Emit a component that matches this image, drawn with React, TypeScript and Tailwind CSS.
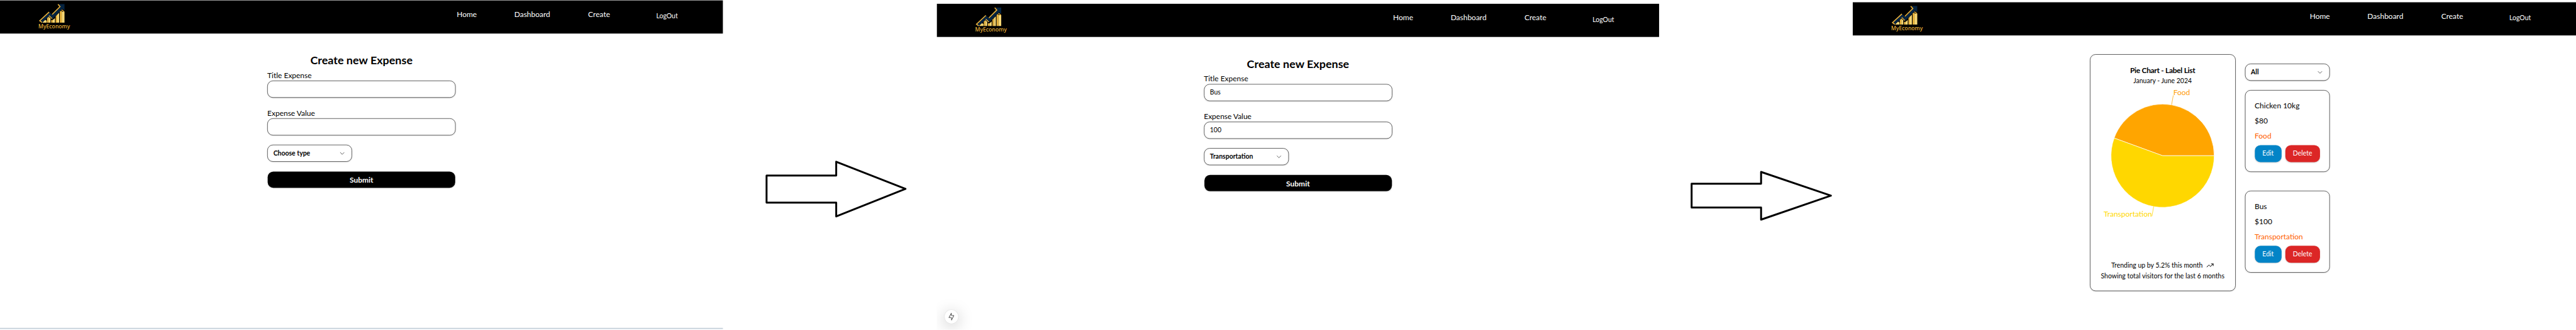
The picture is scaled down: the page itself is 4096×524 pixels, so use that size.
import type { ReactNode } from "react";
import { ChevronDown, TrendingUp } from "lucide-react";

function Logo() {
  return (
    <svg className="h-[88px] w-[92px] shrink-0" viewBox="0 0 92 88">
      <path d="M14 59 L22 51 L26 54 V59 Z" fill="#f7d774" />
      <path d="M27 59 V47 L31 43 V59 Z" fill="#e9b33a" />
      <path d="M31 59 V43 L36 48 V59 Z" fill="#f7d774" />
      <path d="M38 59 V52 H42 V59 Z" fill="#e9b33a" />
      <path d="M42 59 V52 L48 47 V59 Z" fill="#f7d774" />
      <path d="M50 59 V42 L54 38 V59 Z" fill="#e9b33a" />
      <path d="M54 59 V38 L59 33 V59 Z" fill="#f7d774" />
      <path d="M61 59 V29 L66 27 V59 Z" fill="#e9b33a" />
      <path d="M66 59 V30 H73.300 V59 Z" fill="#f7d774" />
      <path
        d="M58 10 H73.300 V27 L68 22.500 L41.500 49 L33 41 L14 59 L8 54 L33 31 L41 38.500 L62.500 16.500 Z"
        fill="#052340"
      />
      <path
        d="M13.500 58.500 L7.500 54 L32.500 31 M40.500 37.500 L61.500 16.500 L56 10.500"
        fill="none"
        stroke="#eeb33a"
        strokeWidth="2.600"
      />
      <path d="M32 40.500 L40.500 48.500 M66 25 L72.500 30.500" fill="none" stroke="#eeb33a" strokeWidth="2.200" />
      <text
        x="4"
        y="74"
        textLength="84"
        lengthAdjust="spacingAndGlyphs"
        fill="#e9b33a"
        className="font-['Noto_Sans',sans-serif] text-[14px] font-medium"
      >
        MyEconomy
      </text>
    </svg>
  );
}

function NavBar() {
  return (
    <nav className="flex h-[88px] w-full items-start justify-between bg-black pl-[98px] pr-[120px] text-white">
      <Logo />
      <div className="flex pt-[21px] text-[20px] leading-[30px]">
        <span className="w-[153px]">Home</span>
        <span className="w-[196px]">Dashboard</span>
        <span className="w-[181px]">Create</span>
        <span className="w-[57px] pt-[6px] text-[17.500px]">LogOut</span>
      </div>
    </nav>
  );
}

function Screen({ className, children }: { className: string; children: ReactNode }) {
  return (
    <section className={`flex shrink-0 flex-col items-center ${className}`}>
      <NavBar />
      {children}
    </section>
  );
}

function Select({ value }: { value: string }) {
  return (
    <div className="flex h-[45px] w-[225px] items-center justify-between rounded-[15px] border-[1.250px] border-black pl-[15px] pr-[15px] text-[17.500px] font-bold shadow-sm">
      <span>{value}</span>
      <ChevronDown className="h-[20px] w-[20px] opacity-60" />
    </div>
  );
}

function Field({ label, value }: { label: string; value: string }) {
  return (
    <div className="flex h-[100px] flex-col">
      <span className="h-[30px] text-[20px] leading-[30px]">{label}</span>
      <div className="flex h-[45px] items-center rounded-[15px] border-[1.250px] border-black pl-[15px] text-[17.500px] shadow-sm">
        {value}
      </div>
    </div>
  );
}

function ExpenseForm({ title, amount, type }: { title: string; amount: string; type: string }) {
  return (
    <div className="mt-[51px] flex w-[500px] flex-col">
      <h1 className="h-[44px] text-center text-[30px] font-bold leading-[38px]">Create new Expense</h1>
      <Field label="Title Expense" value={title} />
      <Field label="Expense Value" value={amount} />
      <Select value={type} />
      <div className="mx-px mt-[26px] flex h-[43px] items-center justify-center rounded-[15px] bg-black text-[20px] font-bold text-white shadow">
        Submit
      </div>
    </div>
  );
}

function FlowArrow({ className, points }: { className: string; points: string }) {
  return (
    <svg className={`shrink-0 ${className}`} viewBox="0 0 380 160">
      <polygon points={points} fill="none" stroke="black" strokeWidth="5" strokeLinejoin="round" />
    </svg>
  );
}

function PieChart() {
  return (
    <svg className="mt-[2px] h-[380px] w-[384px]" viewBox="0 0 384 380">
      <path d="M192 184 H329 A137 137 0 0 0 63.260 137.140 Z" fill="#ffa500" stroke="white" strokeWidth="1.250" />
      <path d="M192 184 L63.260 137.140 A137 137 0 1 0 329 184 Z" fill="#ffd700" stroke="white" strokeWidth="1.250" />
      <path d="M215.800 49 L220.300 24" stroke="#ffa500" strokeWidth="1.250" />
      <path d="M168.200 319 L163.700 344.500" stroke="#ffd700" strokeWidth="1.250" />
      <text x="220.500" y="24" fill="#ff9d0a" className="text-[20px]">Food</text>
      <text x="163.500" y="345" textAnchor="end" fill="#ffd700" className="text-[20px]">Transportation</text>
    </svg>
  );
}

function ExpenseCard({ title, price, type }: { title: string; price: string; type: string }) {
  return (
    <div className="flex h-[217px] w-[225px] flex-col rounded-[15px] border-[1.250px] border-black px-[25px] pt-[24px] text-[20px] shadow-sm">
      <span className="h-[40px] leading-[30px]">{title}</span>
      <span className="h-[40px] leading-[30px]">{price}</span>
      <span className="h-[41px] leading-[30px] text-[#ff6000]">{type}</span>
      <div className="flex gap-[10px] text-[17.500px] text-white">
        <div className="flex h-[45px] w-[71px] items-center justify-center rounded-[15px] bg-[#0284c7] shadow">Edit</div>
        <div className="flex h-[45px] w-[92px] items-center justify-center rounded-[15px] bg-[#dc2626] shadow">Delete</div>
      </div>
    </div>
  );
}

function Dashboard() {
  return (
    <div className="mt-[50px] flex gap-[25px] pr-[25px]">
      <div className="flex h-[628px] w-[387px] flex-col items-center rounded-[15px] border-[1.250px] border-black pt-[28px] shadow-sm">
        <h2 className="h-[29px] text-[20px] font-bold leading-[24px] tracking-[-0.500px]">Pie Chart - Label List</h2>
        <p className="h-[25px] text-[17.500px] leading-[25px]">January - June 2024</p>
        <PieChart />
        <div className="mt-[80px] flex h-[30px] items-center gap-[10px] text-[17.500px] leading-[20px]">
          Trending up by 5.2% this month
          <TrendingUp className="h-[20px] w-[20px]" />
        </div>
        <p className="text-[17.500px] leading-[28px]">Showing total visitors for the last 6 months</p>
      </div>
      <div className="flex flex-col pt-[25px]">
        <Select value="All" />
        <div className="mt-[25px] flex flex-col gap-[50px]">
          <ExpenseCard title="Chicken 10kg" price="$80" type="Food" />
          <ExpenseCard title="Bus" price="$100" type="Transportation" />
        </div>
      </div>
    </div>
  );
}

function DevIndicator() {
  return (
    <div className="mb-[17px] ml-[21px] mt-auto flex h-[36px] w-[36px] items-center justify-center self-start rounded-full bg-white shadow-[0_0_0_1px_#e2e2e2,0_8px_40px_rgba(0,0,0,0.25)]">
      <svg className="h-[24px] w-[24px]" viewBox="-12 -12 24 24">
        <path
          d="M-0.200 -9.500 L-6.500 2.300 H0 L0.300 9 L6.500 -3 H0 Z"
          fill="none"
          stroke="#5a5a5a"
          strokeWidth="1.700"
          strokeLinejoin="round"
        />
      </svg>
    </div>
  );
}

export default function App() {
  return (
    <main className="h-[524px] w-[4096px] overflow-hidden bg-white">
      <div className="flex h-[875px] w-[6842px] origin-top-left scale-[0.59866] items-start overflow-hidden bg-white font-['Lato',sans-serif] text-black">
        <Screen className="h-[875px] w-[1920px] pt-[1px]">
          <ExpenseForm title="" amount="" type="Choose type" />
          <div className="mb-[2px] mt-auto h-[3px] w-full border-t border-[#a9b3bb] bg-[#d5e1eb]" />
        </Screen>
        <FlowArrow
          className="ml-[110px] mt-[420px] h-[160px] w-[380px]"
          points="6,45.500 191,45.500 191,9 375,81 191,154 191,117.500 6,117.500"
        />
        <Screen className="ml-[78px] h-[875px] w-[1919px] overflow-hidden pt-[10px]">
          <ExpenseForm title="Bus" amount="100" type="Transportation" />
          <DevIndicator />
        </Screen>
        <FlowArrow
          className="ml-[80px] mt-[440px] h-[160px] w-[380px]"
          points="6,47.500 190.500,47.500 190.500,16 376,79 190.500,142.500 190.500,110.500 6,110.500"
        />
        <Screen className="ml-[54px] h-[875px] w-[1921px] pt-[6px]">
          <Dashboard />
        </Screen>
      </div>
    </main>
  );
}
